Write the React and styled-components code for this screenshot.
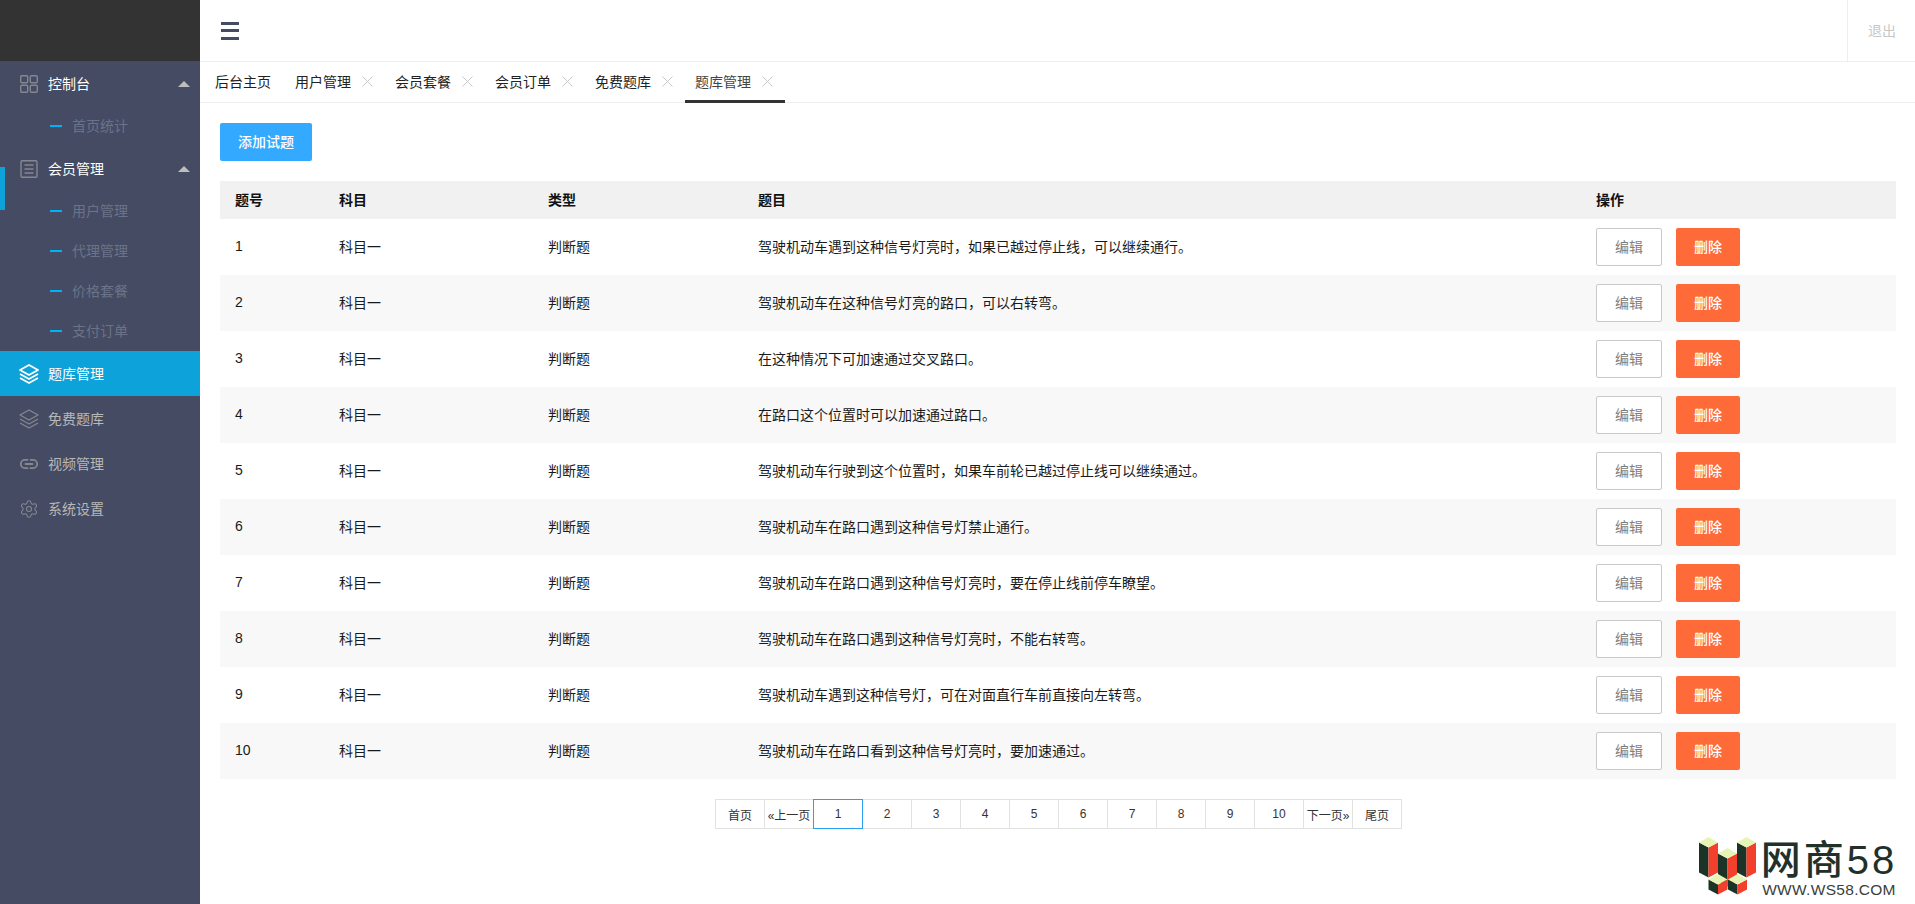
import React from "react";
import styled, { createGlobalStyle } from "styled-components";
import { Settings } from "lucide-react";

const questions = [
  "驾驶机动车遇到这种信号灯亮时，如果已越过停止线，可以继续通行。",
  "驾驶机动车在这种信号灯亮的路口，可以右转弯。",
  "在这种情况下可加速通过交叉路口。",
  "在路口这个位置时可以加速通过路口。",
  "驾驶机动车行驶到这个位置时，如果车前轮已越过停止线可以继续通过。",
  "驾驶机动车在路口遇到这种信号灯禁止通行。",
  "驾驶机动车在路口遇到这种信号灯亮时，要在停止线前停车瞭望。",
  "驾驶机动车在路口遇到这种信号灯亮时，不能右转弯。",
  "驾驶机动车遇到这种信号灯，可在对面直行车前直接向左转弯。",
  "驾驶机动车在路口看到这种信号灯亮时，要加速通过。",
];

const tabs = ["用户管理", "会员套餐", "会员订单", "免费题库", "题库管理"];
const pages = ["首页", "«上一页", "1", "2", "3", "4", "5", "6", "7", "8", "9", "10", "下一页»", "尾页"];

const GridIcon = () => (
  <svg width="18" height="18" viewBox="0 0 18 18" fill="none" stroke="currentColor" strokeWidth="1.4">
    <rect x="0.7" y="0.7" width="7" height="7" rx="1.2" />
    <rect x="10.3" y="0.7" width="7" height="7" rx="1.2" />
    <rect x="0.7" y="10.3" width="7" height="7" rx="1.2" />
    <rect x="10.3" y="10.3" width="7" height="7" rx="1.2" />
  </svg>
);

const ListIcon = () => (
  <svg width="18" height="18" viewBox="0 0 18 18" fill="none" stroke="currentColor" strokeWidth="1.4">
    <rect x="1" y="0.7" width="16" height="16.6" rx="1.2" />
    <path d="M4.5 5h9M4.5 9h9M4.5 13h9" />
  </svg>
);

const LayersIcon = ({ weight = 1.3 }) => (
  <svg width="20" height="20" viewBox="0 0 20 20" fill="none" stroke="currentColor" strokeWidth={weight} strokeLinejoin="round">
    <path d="M10 1 19 6 10 11 1 6Z" />
    <path d="M1 10 10 15 19 10" />
    <path d="M1 14 10 19 19 14" />
  </svg>
);

const LinkIcon = () => (
  <svg width="18" height="18" viewBox="0 0 18 18" fill="none" stroke="currentColor" strokeWidth="1.8" strokeLinecap="round">
    <path d="M7.5 4.8H5a4.2 4.2 0 0 0 0 8.4h2.5" />
    <path d="M10.5 4.8H13a4.2 4.2 0 0 1 0 8.4h-2.5" />
    <path d="M5.5 9h7" />
  </svg>
);

const CloseIcon = () => (
  <svg width="11" height="11" viewBox="0 0 11 11" stroke="#c9c9c9" strokeWidth="1">
    <path d="M0.5 0.5 10.5 10.5M10.5 0.5 0.5 10.5" />
  </svg>
);

const Block = ({ x, y, h }) => (
  <g transform={`translate(${x} ${y})`}>
    <path d={`M0 5.5 9.5 10.5V${10.5 + h}L0 ${5.5 + h}Z`} fill="#1c3328" />
    <path d={`M9.5 10.5 19 5.5V${5.5 + h}L9.5 ${10.5 + h}Z`} fill="#f2402c" />
    <path d="M9.5 0 19 5.5 9.5 10.5 0 5.5Z" fill="#e6f5b4" />
  </g>
);

const WsLogo = () => (
  <svg width="58" height="60" viewBox="0 0 58 60">
    <Block x={0} y={0} h={30} />
    <Block x={38} y={0} h={30} />
    <Block x={19} y={11} h={28} />
    <Block x={9.5} y={37} h={10} />
    <Block x={29} y={37} h={10} />
  </svg>
);

const App = () => {
  return (
    <Page>
      <GlobalStyle />
      <Sidebar>
        <Brand />
        <NavItem $open>
          <NavIcon><GridIcon /></NavIcon>
          控制台
          <Caret />
        </NavItem>
        <SubItem>首页统计</SubItem>
        <NavItem $open>
          <NavIcon><ListIcon /></NavIcon>
          会员管理
          <Caret />
        </NavItem>
        <Marker />
        <SubItem>用户管理</SubItem>
        <SubItem>代理管理</SubItem>
        <SubItem>价格套餐</SubItem>
        <SubItem>支付订单</SubItem>
        <NavItem $active>
          <NavIcon $active><LayersIcon weight={1.8} /></NavIcon>
          题库管理
        </NavItem>
        <NavItem>
          <NavIcon><LayersIcon /></NavIcon>
          免费题库
        </NavItem>
        <NavItem>
          <NavIcon><LinkIcon /></NavIcon>
          视频管理
        </NavItem>
        <NavItem>
          <NavIcon><Settings size={20} strokeWidth={1.3} /></NavIcon>
          系统设置
        </NavItem>
      </Sidebar>

      <Main>
        <TopBar>
          <Burger>
            <span />
            <span />
            <span />
          </Burger>
          <Logout>退出</Logout>
        </TopBar>

        <TabBar>
          <Tab>后台主页</Tab>
          {tabs.map((name, i) => (
            <Tab key={name} $closable $active={i === tabs.length - 1}>
              {name}
              <CloseIcon />
            </Tab>
          ))}
        </TabBar>

        <Content>
          <AddButton>添加试题</AddButton>
          <Table>
            <colgroup>
              <Col $w={104} />
              <Col $w={209} />
              <Col $w={210} />
              <Col $w={838} />
              <Col $w={315} />
            </colgroup>
            <thead>
              <tr>
                <Th>题号</Th>
                <Th>科目</Th>
                <Th>类型</Th>
                <Th>题目</Th>
                <Th>操作</Th>
              </tr>
            </thead>
            <tbody>
              {questions.map((q, i) => (
                <Row key={q}>
                  <Td>{i + 1}</Td>
                  <Td>科目一</Td>
                  <Td>判断题</Td>
                  <Td>{q}</Td>
                  <Td>
                    <Actions>
                      <EditButton>编辑</EditButton>
                      <DeleteButton>删除</DeleteButton>
                    </Actions>
                  </Td>
                </Row>
              ))}
            </tbody>
          </Table>

          <Pager>
            {pages.map((p) => (
              <PageCell key={p} $current={p === "1"}>{p}</PageCell>
            ))}
          </Pager>
        </Content>
      </Main>

      <Watermark>
        <WsLogo />
        <WatermarkText>
          <WatermarkName>网商58</WatermarkName>
          <WatermarkUrl>WWW.WS58.COM</WatermarkUrl>
        </WatermarkText>
      </Watermark>
    </Page>
  );
};

export default App;

const GlobalStyle = createGlobalStyle`
  html, body {
    margin: 0;
    padding: 0;
    background: #fff;
  }
  body {
    font-family: "Liberation Sans", "Noto Sans CJK SC", sans-serif;
    font-size: 14px;
    color: #1a1a1a;
  }
  * {
    box-sizing: border-box;
  }
`;

const Page = styled.div`
  position: relative;
  display: flex;
  height: 904px;
  overflow: hidden;
`;

const Sidebar = styled.aside`
  position: relative;
  flex: 0 0 200px;
  background: #444b63;
`;

const Brand = styled.div`
  height: 61px;
  background: #333;
`;

const NavItem = styled.div`
  display: flex;
  align-items: center;
  height: 45px;
  padding: 0 0 2px 19px;
  color: ${(props) => (props.$active || props.$open ? "#fff" : "#b8b8b8")};
  background: ${(props) => (props.$active ? "#0ea2db" : "transparent")};
`;

const NavIcon = styled.span`
  display: flex;
  align-items: center;
  justify-content: center;
  width: 20px;
  margin: 2px 9px 0 0;
  color: ${(props) => (props.$active ? "#fff" : "#85888f")};
`;

const Caret = styled.span`
  margin: 2px 10px 0 auto;
  border-left: 6px solid transparent;
  border-right: 6px solid transparent;
  border-bottom: 6px solid #bdbdbd;
`;

const SubItem = styled.div`
  display: flex;
  align-items: center;
  height: 40px;
  padding: 0 0 2px 50px;
  color: #6c7388;

  &::before {
    content: "";
    width: 12px;
    height: 2px;
    margin: 2px 10px 0 0;
    background: #00b2f5;
  }
`;

const Marker = styled.div`
  position: absolute;
  left: 0;
  top: 167px;
  width: 5px;
  height: 43px;
  background: #0ea2db;
`;

const Main = styled.main`
  flex: 1;
  min-width: 0;
`;

const TopBar = styled.header`
  display: flex;
  justify-content: space-between;
  height: 62px;
  padding-left: 21px;
  border-bottom: 1px solid #eee;
`;

const Burger = styled.div`
  display: flex;
  flex-direction: column;
  justify-content: space-between;
  align-self: center;
  width: 18px;
  height: 18px;

  span {
    height: 3px;
    background: #444b63;
  }
`;

const Logout = styled.div`
  display: flex;
  align-items: center;
  width: 68px;
  padding: 0 0 2px 20px;
  border-left: 1px solid #eee;
  color: #c8c8c8;
`;

const TabBar = styled.nav`
  display: flex;
  height: 41px;
  padding-left: 5px;
  border-bottom: 1px solid #eee;
`;

const Tab = styled.div`
  display: flex;
  align-items: center;
  gap: 11px;
  width: ${(props) => (props.$closable ? "100px" : "80px")};
  height: 41px;
  padding-left: 10px;
  color: ${(props) => (props.$active ? "#444" : "#222")};
  border-bottom: 3px solid ${(props) => (props.$active ? "#333" : "transparent")};
`;

const Content = styled.section`
  padding: 20px 19px 0 20px;
`;

const AddButton = styled.button`
  display: block;
  width: 92px;
  height: 38px;
  padding: 0 0 2px;
  border: 0;
  border-radius: 2px;
  background: #33a9ff;
  color: #fff;
  font: inherit;
  font-weight: 500;
`;

const Table = styled.table`
  width: 1676px;
  margin-top: 20px;
  border-collapse: collapse;
  table-layout: fixed;
`;

const Col = styled.col`
  width: ${(props) => props.$w}px;
`;

const Th = styled.th`
  height: 38px;
  padding: 0 0 2px 15px;
  background: #f1f1f1;
  color: #111;
  font-weight: 700;
  text-align: left;
`;

const Row = styled.tr`
  height: 56px;

  &:nth-child(even) {
    background: #f8f8f8;
  }
`;

const Td = styled.td`
  padding: 0 0 2px 15px;
`;

const Actions = styled.div`
  display: flex;
  gap: 14px;
  margin-top: 2px;
`;

const EditButton = styled.button`
  width: 66px;
  height: 38px;
  padding: 0 0 2px;
  border: 1px solid #c9c9c9;
  border-radius: 2px;
  background: #fff;
  color: #808080;
  font: inherit;
`;

const DeleteButton = styled.button`
  width: 64px;
  height: 38px;
  padding: 0 0 2px;
  border: 0;
  border-radius: 2px;
  background: #ff6a39;
  color: #fff;
  font: inherit;
  font-weight: 500;
`;

const Pager = styled.div`
  display: flex;
  justify-content: center;
  margin-top: 20px;
  padding-left: 2px;
`;

const PageCell = styled.span`
  position: relative;
  z-index: ${(props) => (props.$current ? 1 : 0)};
  display: flex;
  align-items: center;
  justify-content: center;
  width: 50px;
  height: 30px;
  margin-left: -1px;
  border: 1px solid ${(props) => (props.$current ? "#2aa0f5" : "#e2e2e2")};
  color: #333;
  font-size: 12px;
  white-space: nowrap;
`;

const Watermark = styled.div`
  position: absolute;
  right: 16px;
  bottom: 6px;
  display: flex;
  align-items: flex-start;
  gap: 2px;
`;

const WatermarkText = styled.div`
  display: flex;
  flex-direction: column;
  align-items: center;
  width: 140px;
  color: #22302a;
`;

const WatermarkName = styled.div`
  margin-top: 2px;
  font-size: 40px;
  font-weight: 500;
  line-height: 42px;
  letter-spacing: 3px;
  white-space: nowrap;
`;

const WatermarkUrl = styled.div`
  margin-top: 1px;
  font-size: 15.5px;
  line-height: 16px;
  letter-spacing: 0.3px;
  color: #3a3f3c;
`;
